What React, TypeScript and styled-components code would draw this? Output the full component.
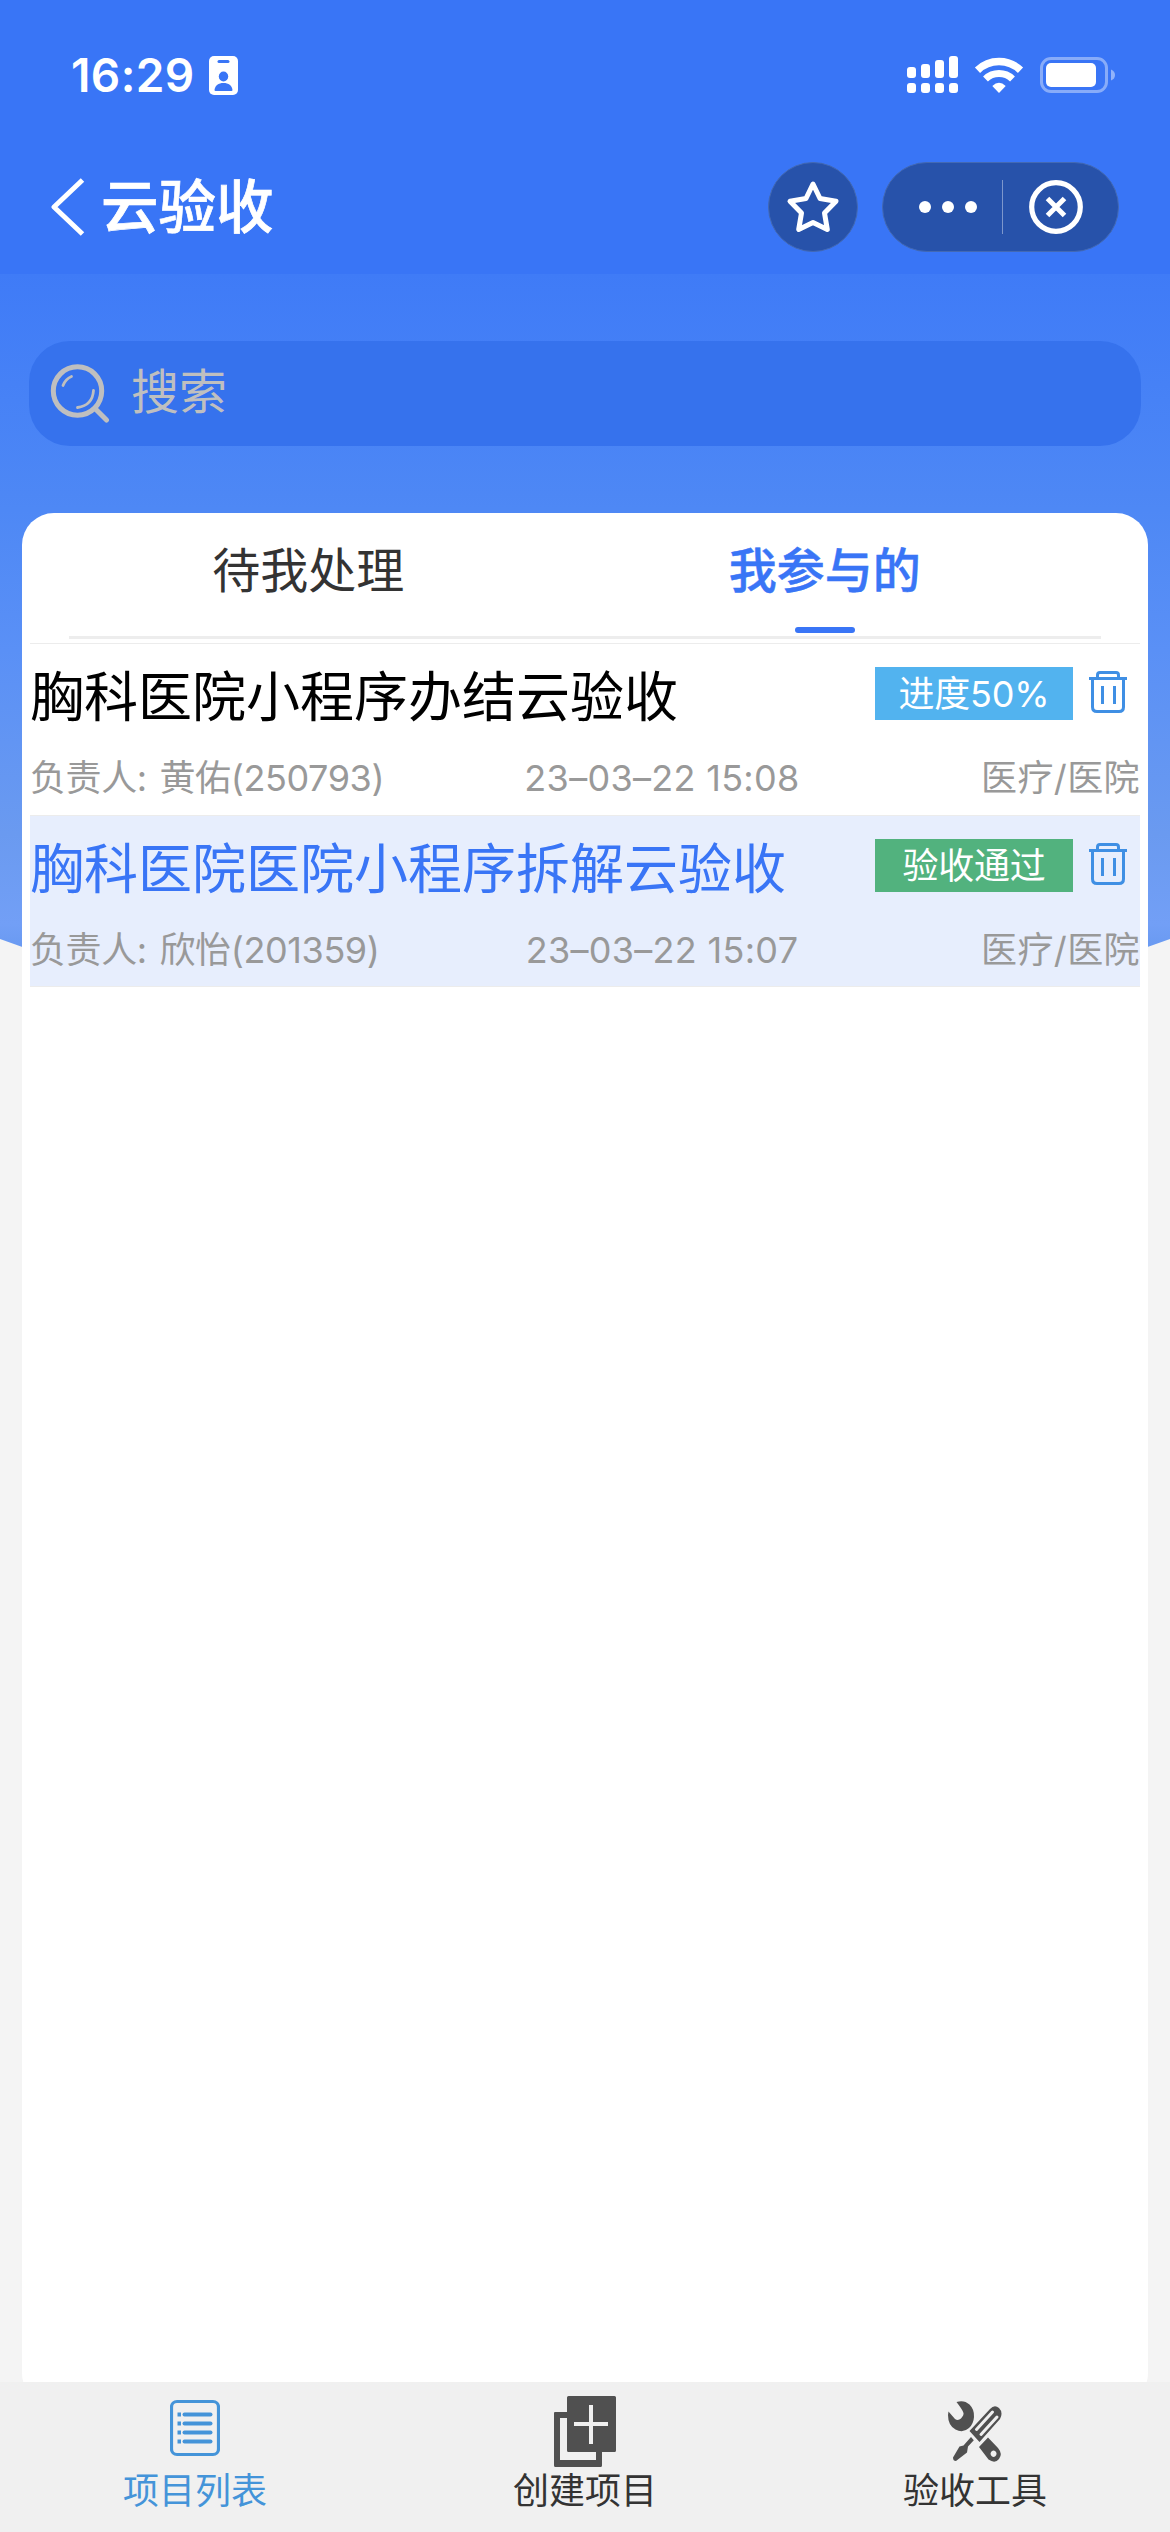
import React from "react";
import styled, { createGlobalStyle } from "styled-components";

const GlobalStyle = createGlobalStyle`
  *, *::before, *::after { box-sizing: border-box; }
  body {
    margin: 0;
    background: #f4f4f4;
    font-family: "Inter", "Noto Sans CJK SC", sans-serif;
    -webkit-font-smoothing: antialiased;
  }
  svg { display: block; }
`;

const Screen = styled.div`
  width: 1170px;
  height: 2532px;
  display: flex;
  flex-direction: column;
  overflow: hidden;
  background: #f4f4f4;
`;

const Header = styled.header`
  flex: none;
  height: 274px;
  background: #3975f6;
  color: #fff;
`;

const StatusBar = styled.div`
  height: 150px;
  padding: 0 55px 0 71px;
  display: flex;
  align-items: center;
  justify-content: space-between;
`;

const StatusGroup = styled.div<{ $gap: number }>`
  display: flex;
  align-items: center;
  gap: ${(p) => p.$gap}px;
`;

const Clock = styled.span`
  font-size: 46px;
  line-height: 50px;
  font-weight: 600;
  letter-spacing: 0.4px;
`;

const NavBar = styled.div`
  height: 114px;
  padding: 0 51px;
  display: flex;
  align-items: center;
`;

const Title = styled.h1`
  flex: 1;
  margin: 0 0 0 16px;
  font-size: 57.5px;
  line-height: 72px;
  font-weight: 500;
  -webkit-text-stroke: 0.7px currentColor;
`;

const RoundButton = styled.button`
  width: 90px;
  height: 90px;
  padding: 0;
  margin-right: 24px;
  border: 1px solid #4369b3;
  border-radius: 45px;
  background: #2752aa;
  display: flex;
  align-items: center;
  justify-content: center;
`;

const Capsule = styled.div`
  width: 237px;
  height: 90px;
  border: 1px solid #4369b3;
  border-radius: 45px;
  background: #2752aa;
  display: flex;
  align-items: center;
`;

const CapsuleHalf = styled.div`
  flex: 1;
  display: flex;
  justify-content: center;
  &:first-child { padding-left: 12px; }
  &:last-child { padding-right: 9px; }
`;

const CapsuleDivider = styled.span`
  width: 1px;
  height: 54px;
  background: #7d97cc;
`;

const Main = styled.main`
  flex: 1;
  min-height: 0;
  position: relative;
  overflow: hidden;
  padding: 67px 22px 0;
  &::before {
    content: "";
    position: absolute;
    inset: 0 0 auto 0;
    height: 780px;
    background: linear-gradient(#3f7bf7 0, #4e88f5 236px, #5a90f6 376px, #6a9af0 560px, #729ff6 650px, #6396ee 690px);
    clip-path: path("M0 0H1170V665Q585 880 0 665Z");
  }
`;

const SearchBox = styled.div`
  position: relative;
  height: 105px;
  margin: 0 7px;
  padding: 0 0 2px 21px;
  border-radius: 41px;
  background: #3672ed;
  display: flex;
  align-items: center;
  gap: 21px;
  color: #bfbfbf;
  font-size: 48px;
`;

const SearchText = styled.span`
  line-height: 60px;
  padding-bottom: 2px;
`;

const Card = styled.section`
  position: relative;
  height: 1892px;
  margin-top: 67px;
  padding: 0 8px;
  border-radius: 32px;
  background: #fff;
`;

const Tabs = styled.div`
  height: 123px;
  margin: 0 57px 0 20px;
  display: flex;
`;

const TabsDivider = styled.div`
  height: 3px;
  margin: 0 39px;
  background: #ededed;
`;

const Tab = styled.div<{ $active?: boolean }>`
  flex: 1;
  padding-top: 24px;
  display: flex;
  flex-direction: column;
  align-items: center;
  justify-content: space-between;
  font-size: 48px;
  line-height: 68px;
  font-weight: ${(p) => (p.$active ? 500 : 400)};
  color: ${(p) => (p.$active ? "#3975f6" : "#333")};
  -webkit-text-stroke: ${(p) => (p.$active ? "0.5px" : "0")} currentColor;
  &::after {
    content: "";
    width: 60px;
    height: 6px;
    margin-bottom: 3px;
    border-radius: 3px;
    background: ${(p) => (p.$active ? "#3975f6" : "transparent")};
  }
`;

const List = styled.div`
  margin-top: 4px;
  border-top: 1px solid #ececec;
`;

const Row = styled.article<{ $selected?: boolean }>`
  height: 171.5px;
  padding-top: 18px;
  border-bottom: 1px solid #ececec;
  background: ${(p) => (p.$selected ? "#e7eefd" : "#fff")};
  color: ${(p) => (p.$selected ? "#3975f6" : "#000")};
`;

const RowTop = styled.div`
  height: 68px;
  padding-right: 13px;
  display: flex;
`;

const RowTitle = styled.div`
  flex: 1;
  padding-top: 2px;
  font-size: 54px;
  line-height: 68px;
  white-space: nowrap;
`;

const Badge = styled.span<{ $color: string }>`
  width: 198px;
  height: 53px;
  margin: 5px 16px 0 0;
  background: ${(p) => p.$color};
  color: #fff;
  font-size: 36px;
  line-height: 54px;
  letter-spacing: -0.2px;
  text-align: center;
`;

const TrashSlot = styled.span`
  margin-top: 9px;
`;

const Meta = styled.div`
  margin-top: 21px;
  display: grid;
  grid-template-columns: 450px 364px 296px;
  font-size: 36px;
  line-height: 54px;
  color: #999;
  white-space: nowrap;
`;

const Owner = styled.span`
  letter-spacing: -0.4px;
  word-spacing: 3px;
`;

const Time = styled.span`
  text-align: center;
  letter-spacing: 0.3px;
`;

const Kind = styled.span`
  text-align: right;
  letter-spacing: 0.4px;
`;

const TabBar = styled.nav`
  flex: none;
  height: 150px;
  background: #f0f0f0;
  display: flex;
`;

const TabBarItem = styled.div<{ $active?: boolean }>`
  flex: 1;
  display: flex;
  flex-direction: column;
  align-items: center;
  font-size: 36px;
  line-height: 46px;
  color: ${(p) => (p.$active ? "#4494d9" : "#333")};
`;

const TabBarIcon = styled.span`
  height: 86px;
  padding-top: 14px;
`;

const IdBadgeIcon = () => (
  <svg width="29" height="39" viewBox="0 0 29 39">
    <rect width="29" height="39" rx="5" fill="#fff" />
    <rect x="8.500" y="4" width="12" height="3" rx="1.500" fill="#3975f6" />
    <ellipse cx="14.500" cy="20.500" rx="4.700" ry="5" fill="#3975f6" />
    <path d="M5.500 34C6 29.500 9.500 27 14.500 27s8.500 2.500 9 7q0 1-1 1h-16q-1 0-1-1z" fill="#3975f6" />
  </svg>
);

const SignalIcon = () => (
  <svg width="51" height="38" viewBox="0 0 51 38" fill="#fff">
    {[11, 8, 4, 0].map((y, i) => (
      <React.Fragment key={y}>
        <rect x={i * 14} y={y} width="9" height={22 - y} rx="3" />
        <rect x={i * 14} y="27" width="9" height="10" rx="3" />
      </React.Fragment>
    ))}
  </svg>
);

const WifiIcon = () => (
  <svg width="50" height="37" viewBox="0 0 50 37" fill="none" stroke="#fff">
    <path d="M3.500 13.200A31 31 0 0 1 46.500 13.200" strokeWidth="7.500" />
    <path d="M11.500 22A19.500 19.500 0 0 1 38.500 22" strokeWidth="7" />
    <path d="M18.300 29Q25 22.500 31.700 29L25 36z" fill="#fff" stroke="none" />
  </svg>
);

const BatteryIcon = () => (
  <svg width="75" height="36" viewBox="0 0 75 36">
    <rect x="1.500" y="1.500" width="65" height="33" rx="9.500" fill="none" stroke="#fff" strokeOpacity=".4" strokeWidth="3" />
    <rect x="6" y="6" width="50" height="24" rx="5" fill="#fff" />
    <path d="M71 12.500Q75 14 75 18t-4 5.500z" fill="#fff" fillOpacity=".45" />
  </svg>
);

const BackIcon = () => (
  <svg width="34" height="58" viewBox="0 0 34 58" fill="none" stroke="#fff" strokeWidth="5" strokeLinejoin="round">
    <path d="M31.500 2L3 29 31.500 56" />
  </svg>
);

const StarIcon = () => (
  <svg width="56" height="54" viewBox="0 0 56 54" fill="none" stroke="#fff" strokeWidth="5" strokeLinejoin="round">
    <path d="M28 4L35 18.500 51 21.200 39.500 33 42.300 49.500 28 42.500 13.700 49.500 16.500 33 5 21.200 21 18.500z" />
  </svg>
);

const MoreIcon = () => (
  <svg width="58" height="12" viewBox="0 0 58 12" fill="#fff">
    <circle cx="6" cy="6" r="6" />
    <circle cx="29" cy="6" r="6" />
    <circle cx="52" cy="6" r="6" />
  </svg>
);

const CloseIcon = () => (
  <svg width="54" height="54" viewBox="0 0 54 54" fill="none" stroke="#fff">
    <circle cx="27" cy="27" r="24.300" strokeWidth="5.200" />
    <path d="M18.500 18.500L35.500 35.500M35.500 18.500L18.500 35.500" strokeWidth="5" />
  </svg>
);

const SearchIcon = () => (
  <svg width="60" height="60" viewBox="0 0 60 60" fill="none" stroke="#bfbfbf" strokeLinecap="round">
    <circle cx="27.500" cy="28" r="24.200" strokeWidth="5" />
    <path d="M45 45.500L56.500 57" strokeWidth="5" />
    <path d="M13 22.500Q15.500 16 21.500 13.500M43.500 27.500Q42.500 42.500 27.500 44.500" strokeWidth="2.800" />
  </svg>
);

const TrashIcon = () => (
  <svg width="38" height="42" viewBox="0 0 38 42" fill="none" stroke="#3f8fe4" strokeWidth="3">
    <path d="M0 7.500H38M8.500 7.500V4Q8.500 1.500 11 1.500H27Q29.500 1.500 29.500 4V7.500M3.500 7.500V36Q3.500 40.500 8 40.500H30Q34.500 40.500 34.500 36V7.500M13.500 15V33M25.500 15V33" />
  </svg>
);

const ListIcon = () => (
  <svg width="50" height="72" viewBox="0 -4 50 72" fill="none" stroke="#4494d9">
    <rect x="1.500" y="1.500" width="47" height="53" rx="5.500" strokeWidth="3.200" />
    {[14.5, 23.5, 32.5, 41.5].map((y) => (
      <g key={y}>
        <path d={`M7.500 ${y}H11`} strokeWidth="4" />
        <path d={`M14.500 ${y}H40.500`} strokeWidth="4" strokeLinecap="round" />
      </g>
    ))}
  </svg>
);

const CreateIcon = () => (
  <svg width="62" height="71" viewBox="0 0 62 71">
    <path fill="#505050" fillRule="evenodd" d="M1 16H13V1.500Q13 0 14.500 0H60.500Q62 0 62 1.500V54.500Q62 56 60.500 56H48V69.500Q48 71 46.500 71H1.500Q0 71 0 69.500V17Q0 16 1 16zM13 22H6V64H42V56H14.500Q13 56 13 54.500z" />
    <path d="M20 28H54M37 9V48" stroke="#f0f0f0" strokeWidth="4" />
  </svg>
);

const ToolsIcon = () => (
  <svg width="56" height="72" viewBox="0 -5 56 72">
    <g fill="#505050">
      <path d="M9.500 1Q17-1.500 22.500 3.500 27.500 8.500 27 16 26.500 23 22 27 16 32.500 8.500 28.500 1 24.500 1 14L1.500 10.500 8 18Q11 20 14 17.500 17 14 16.500 12 16 9.500 9.500 1z" />
      <path d="M22.500 30L43 8Q47.500 3 52 7 56.500 11.500 53 18L32.500 41z" />
      <path d="M24 36L26.800 39.200 21 45.500 20 51.500 9 60Q6 60 6 56.500L12.500 45.500 16.500 44.500z" />
      <path fillRule="evenodd" d="M32 46L41 36.500 51 47Q56 53 52 58 48 63 41.500 58.500zM46.500 49.500a3 3.200 0 1 0 .1 0z" />
    </g>
    <path d="M29.500 28.500L45.500 11M34 33.500L50 16" stroke="#f0f0f0" strokeWidth="3" strokeLinecap="round" />
  </svg>
);

const projects = [
  { title: "胸科医院小程序办结云验收", owner: "黄佑(250793)", time: "23–03–22 15:08", kind: "医疗/医院", status: "进度50%", color: "#52b3ef", selected: false },
  { title: "胸科医院医院小程序拆解云验收", owner: "欣怡(201359)", time: "23–03–22 15:07", kind: "医疗/医院", status: "验收通过", color: "#52b27e", selected: true },
];

export default function App() {
  return (
    <>
      <GlobalStyle />
      <Screen>
        <Header>
          <StatusBar>
            <StatusGroup $gap={14}>
              <Clock>16:29</Clock>
              <IdBadgeIcon />
            </StatusGroup>
            <StatusGroup $gap={16}>
              <SignalIcon />
              <WifiIcon />
              <BatteryIcon />
            </StatusGroup>
          </StatusBar>
          <NavBar>
            <BackIcon />
            <Title>云验收</Title>
            <RoundButton aria-label="收藏"><StarIcon /></RoundButton>
            <Capsule>
              <CapsuleHalf><MoreIcon /></CapsuleHalf>
              <CapsuleDivider />
              <CapsuleHalf><CloseIcon /></CapsuleHalf>
            </Capsule>
          </NavBar>
        </Header>
        <Main>
          <SearchBox>
            <SearchIcon />
            <SearchText>搜索</SearchText>
          </SearchBox>
          <Card>
            <Tabs>
              <Tab>待我处理</Tab>
              <Tab $active>我参与的</Tab>
            </Tabs>
            <TabsDivider />
            <List>
              {projects.map((p) => (
                <Row key={p.title} $selected={p.selected}>
                  <RowTop>
                    <RowTitle>{p.title}</RowTitle>
                    <Badge $color={p.color}>{p.status}</Badge>
                    <TrashSlot><TrashIcon /></TrashSlot>
                  </RowTop>
                  <Meta>
                    <Owner>负责人: {p.owner}</Owner>
                    <Time>{p.time}</Time>
                    <Kind>{p.kind}</Kind>
                  </Meta>
                </Row>
              ))}
            </List>
          </Card>
        </Main>
        <TabBar>
          <TabBarItem $active>
            <TabBarIcon><ListIcon /></TabBarIcon>
            项目列表
          </TabBarItem>
          <TabBarItem>
            <TabBarIcon><CreateIcon /></TabBarIcon>
            创建项目
          </TabBarItem>
          <TabBarItem>
            <TabBarIcon><ToolsIcon /></TabBarIcon>
            验收工具
          </TabBarItem>
        </TabBar>
      </Screen>
    </>
  );
}
